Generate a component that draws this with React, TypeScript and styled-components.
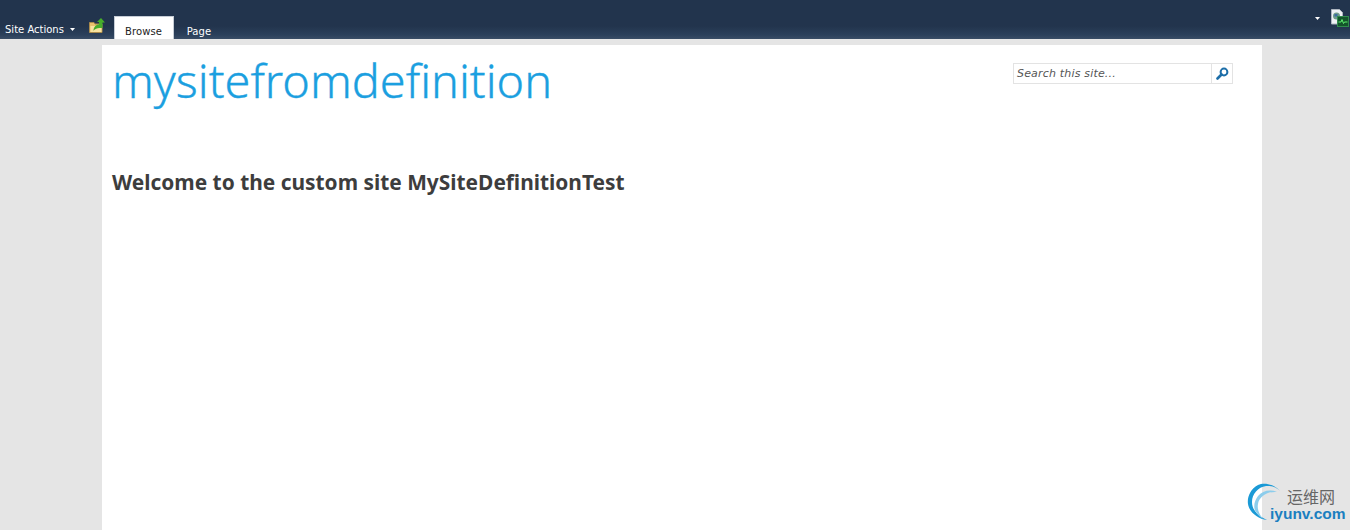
import React from "react";
import styled, {createGlobalStyle} from "styled-components";

const GlobalStyle = createGlobalStyle`
  html, body {
    margin: 0;
    padding: 0;
    height: 100%;
    overflow: hidden;
    background: #e5e5e5;
  }
`;

const Caret = () => <CaretIcon viewBox="0 0 5 3"><path d="M0 0h5L2.500 3z" fill="#fff"/></CaretIcon>;

const UpFolderIcon = () => (
    <svg width="16" height="15" viewBox="0 0 16 15">
        <path d="M0.500 4.500h4.500l1 1.500h7v8.500h-12.500z" fill="#e9c36c" stroke="#a88a4c"/>
        <path d="M1.500 8h11v6h-11z" fill="#f8e3a0"/>
        <path d="M4.500 13c0-4 2.500-6.500 5.500-6.500V4H8l4-4 4 4.500h-2.500V10h-3c-2.500 0-4.500 1-6.500 3z" fill="#46ad2b"/>
    </svg>
);

const DocStatusIcon = () => (
    <svg width="18" height="18" viewBox="0 0 18 18">
        <path d="M0.500 0.500h8l3 3V15H0.500z" fill="#eef1f4" stroke="#aeb6c0"/>
        <circle cx="5.500" cy="7" r="3.500" fill="#6f9a8a"/>
        <path d="M3.500 5h3v2.500h-3z" fill="#3c6ea0"/>
        <rect x="6.500" y="7.500" width="11" height="10" fill="#13552b" stroke="#2f8a4c"/>
        <path d="M7.500 13h2.500l1-2.500 1.500 4 1-1.500h3" fill="none" stroke="#5ff06f"/>
    </svg>
);

const SearchIcon = () => (
    <svg width="13" height="13" viewBox="0 0 13 13">
        <circle cx="8" cy="5" r="3.400" fill="none" stroke="#1d6ea8" strokeWidth="2"/>
        <path d="M5.500 7.500L1.500 11.500" stroke="#1d6ea8" strokeWidth="2.600" strokeLinecap="round"/>
    </svg>
);

const WatermarkRings = () => (
    <svg width="40" height="42" viewBox="0 0 40 42">
        <path d="M34 9C28 2 18 0 12 3 4 7 1 16 2 22c1 8 10 15 19 16C12 34 6 28 6 20 6 12 12 5 20 4c5-.5 10 1 14 5z" fill="#1b9ad6"/>
        <path d="M31 10c-7-3-15-1-19 4-4 5-5 12-2 16 2 3 4 5 7 7-4-5-6-10-5-15 1-7 9-13 19-12z" fill="#8ccdec"/>
    </svg>
);

export default function App() {
    return <Page>
        <GlobalStyle/>
        <Ribbon>
            <SiteActions>Site Actions <Caret/></SiteActions>
            <FolderSlot><UpFolderIcon/></FolderSlot>
            <Tab $active>Browse</Tab>
            <Tab>Page</Tab>
            <RibbonRight>
                <Caret/>
                <DocStatusIcon/>
            </RibbonRight>
        </Ribbon>
        <Panel>
            <Header>
                <SiteTitle>mysitefromdefinition</SiteTitle>
                <SearchBox>
                    <SearchText>Search this site...</SearchText>
                    <SearchButton><SearchIcon/></SearchButton>
                </SearchBox>
            </Header>
            <Welcome>Welcome to the custom site MySiteDefinitionTest</Welcome>
        </Panel>
        <Watermark>
            <WatermarkRings/>
            <WatermarkCn>运维网</WatermarkCn>
            <WatermarkUrl>iyunv.com</WatermarkUrl>
        </Watermark>
    </Page>;
}

const Page = styled.div`
  position: relative;
  height: 530px;
  overflow: hidden;
  display: flex;
  flex-flow: column;
  background: #e5e5e5;
`;

const Ribbon = styled.div`
  flex: none;
  height: 39px;
  box-sizing: border-box;
  display: flex;
  align-items: flex-end;
  padding-left: 5px;
  background: linear-gradient(#22344d 0, #22344d 26px, #2b405b 35px, #394d66 39px);
  font: 10px "DejaVu Sans", Verdana, sans-serif;
  color: #fff;
`;

const SiteActions = styled.div`
  display: flex;
  align-items: center;
  gap: 6px;
  height: 20px;
  width: 83px;
  flex: none;
`;

const CaretIcon = styled.svg`
  width: 5px;
  height: 3px;
`;

const FolderSlot = styled.div`
  display: flex;
  box-sizing: border-box;
  width: 26px;
  height: 21px;
  padding-left: 1px;
  flex: none;
  align-items: flex-start;
`;

const Tab = styled.div<{$active?: boolean}>`
  box-sizing: border-box;
  height: 23px;
  width: ${props => props.$active ? "60px" : "50px"};
  padding: 7px ${props => props.$active ? "1px" : "0"} 0 0;
  text-align: center;
  line-height: 16px;
  letter-spacing: 0.12px;
  color: ${props => props.$active ? "#222" : "#fff"};
  background: ${props => props.$active ? "#fff" : "transparent"};
  border: 1px solid ${props => props.$active ? "#c6cdd6" : "transparent"};
  border-bottom: 0;
`;

const RibbonRight = styled.div`
  margin-left: auto;
  align-self: flex-start;
  display: flex;
  align-items: center;
  gap: 11px;
  padding: 9px 1px 0 0;
`;

const Panel = styled.main`
  flex: 1;
  width: 1160px;
  margin: 6px 0 0 102px;
  box-sizing: border-box;
  padding: 0 10px;
  background: #fff;
`;

const Header = styled.header`
  display: flex;
  justify-content: space-between;
  align-items: flex-start;
  height: 119px;
`;

const SiteTitle = styled.h1`
  margin: 1px 0 0;
  font: 300 46.8px/68px "Noto Sans", sans-serif;
  -webkit-text-stroke: 0.35px #1b9fe0;
  color: #1b9fe0;
`;

const SearchBox = styled.div`
  display: flex;
  box-sizing: border-box;
  width: 220px;
  height: 21px;
  margin: 18px 19px 0 0;
  border: 1px solid #e3e3e3;
`;

const SearchText = styled.div`
  flex: 1;
  padding: 1px 0 0 3px;
  font: italic 11px/18px "DejaVu Sans", Verdana, sans-serif;
  letter-spacing: 0.18px;
  color: #555;
`;

const SearchButton = styled.div`
  width: 20px;
  display: flex;
  align-items: center;
  justify-content: center;
  border-left: 1px solid #e3e3e3;
`;

const Welcome = styled.h2`
  margin: 0;
  font: 700 20.9px/36px "Noto Sans", sans-serif;
  color: #3d3d3d;
`;

const Watermark = styled.div`
  position: absolute;
  left: 1246px;
  top: 482px;
  width: 104px;
  height: 44px;
`;

const WatermarkCn = styled.span`
  position: absolute;
  left: 41px;
  top: 6px;
  font: 16px/16px "Noto Sans CJK SC", sans-serif;
  color: #666;
`;

const WatermarkUrl = styled.span`
  position: absolute;
  left: 24px;
  top: 24px;
  font: 700 15.5px/16px "Liberation Sans", sans-serif;
  color: #1b7fc0;
`;
